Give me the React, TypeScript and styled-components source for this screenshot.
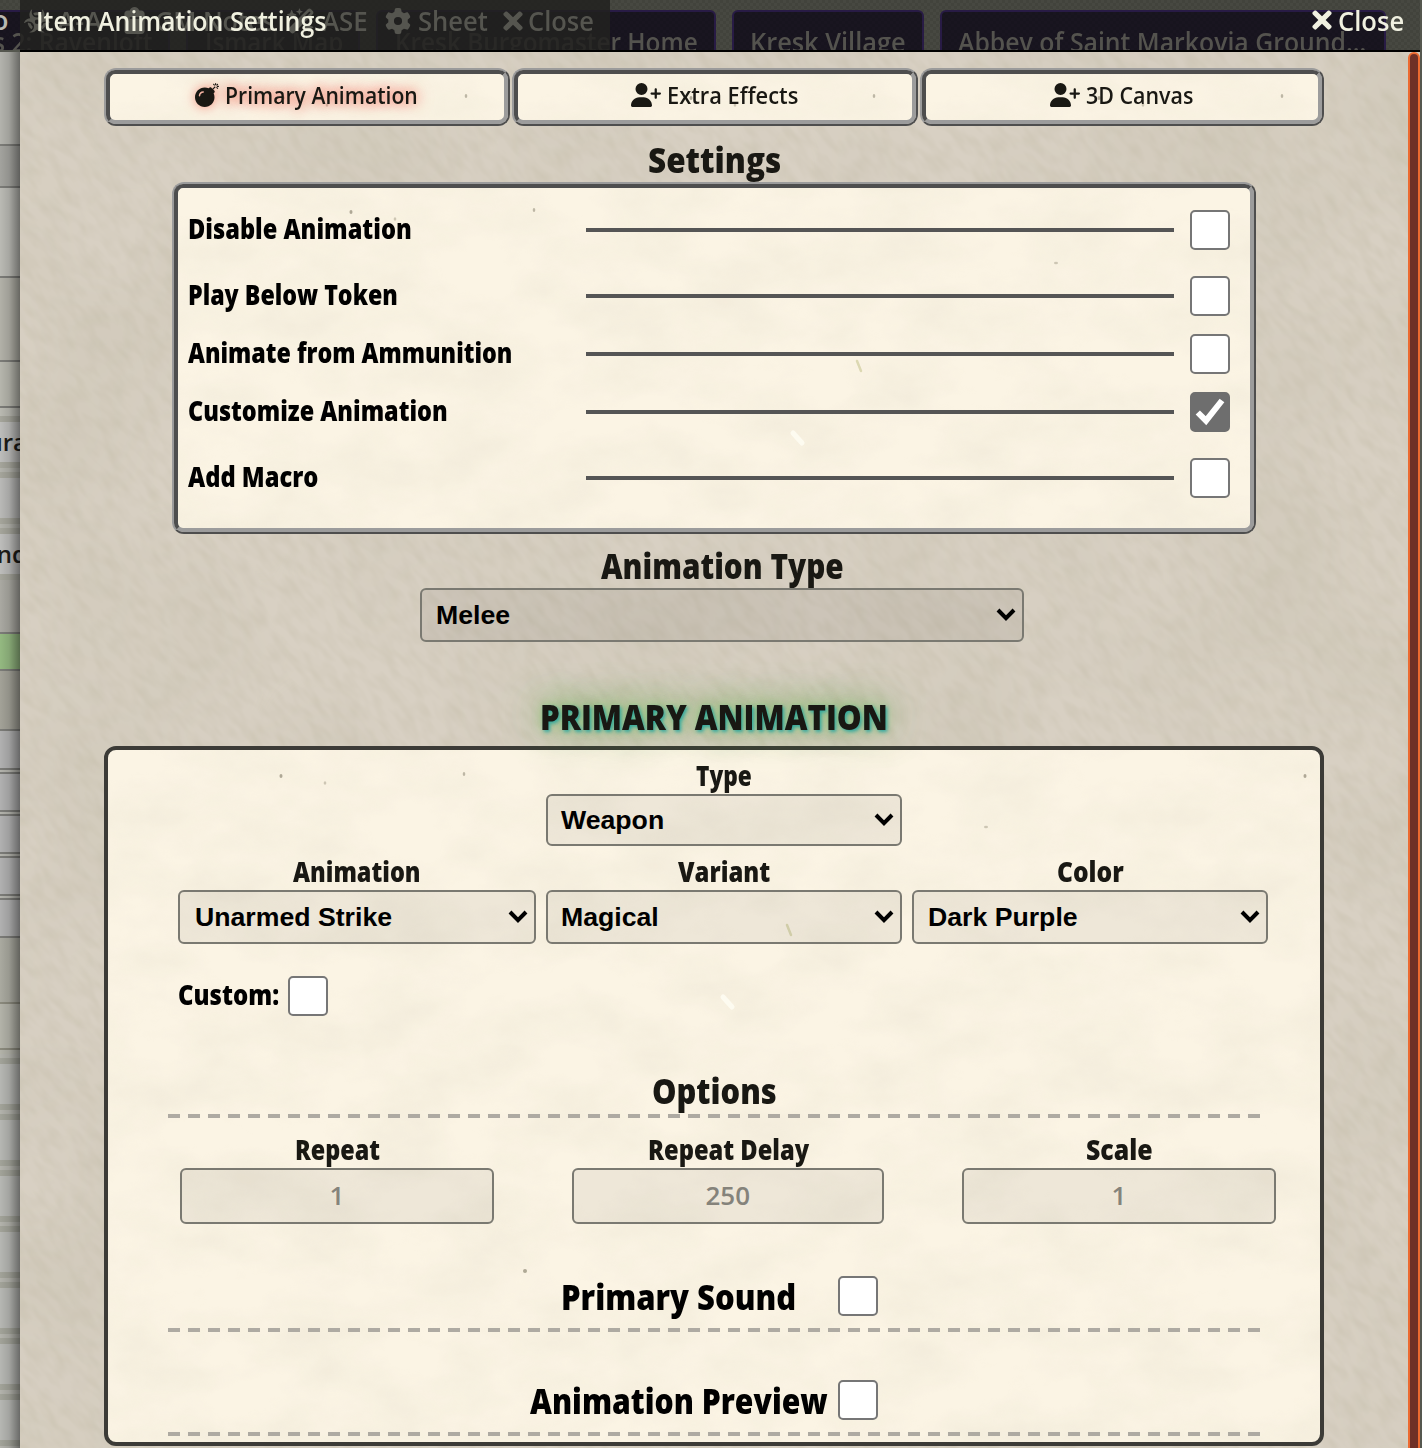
import React, { useLayoutEffect, useRef, useState } from "react";
import styled, { createGlobalStyle, css } from "styled-components";
import {
  FaUserPlus,
  FaGear,
  FaBiohazard,
  FaClipboard,
  FaWandMagicSparkles,
} from "react-icons/fa6";
import { FaBomb, FaTimes } from "react-icons/fa";

const uiFont = '"Open Sans", "Noto Sans", sans-serif';

const svgUri = (svg: string) => `url("data:image/svg+xml,${encodeURIComponent(svg)}")`;

const leather = svgUri(
  `<svg xmlns="http://www.w3.org/2000/svg" width="1400" height="1400"><filter id="n" x="0" y="0" width="100%" height="100%"><feTurbulence type="fractalNoise" baseFrequency="0.045 0.11" numOctaves="2" seed="4"/><feColorMatrix values="0 0 0 0 0.5  0 0 0 0 0.46  0 0 0 0 0.34  0.55 0 0 0 -0.2"/></filter><filter id="b" x="0" y="0" width="100%" height="100%"><feTurbulence type="fractalNoise" baseFrequency="0.006" numOctaves="2" seed="7"/><feColorMatrix values="0 0 0 0 0.5  0 0 0 0 0.47  0 0 0 0 0.36  0.5 0 0 0 -0.18"/></filter><rect width="1400" height="1400" filter="url(#b)"/><g transform="rotate(50 700 700)"><rect x="-400" y="-400" width="2200" height="2200" filter="url(#n)"/></g></svg>`
);

const parchment = svgUri(
  `<svg xmlns="http://www.w3.org/2000/svg" width="1024" height="1024"><filter id="n" x="0" y="0" width="100%" height="100%"><feTurbulence type="fractalNoise" baseFrequency="0.012 0.02" numOctaves="5" seed="9" stitchTiles="stitch"/><feColorMatrix values="0 0 0 0 0.55  0 0 0 0 0.5  0 0 0 0 0.38  0.24 0 0 0 -0.08"/></filter><rect width="1024" height="1024" filter="url(#n)"/><g fill="#8f8874" opacity=".7"><ellipse cx="173" cy="26" rx="1.5" ry="2"/><ellipse cx="217" cy="33" rx="1.3" ry="1.8" opacity=".6"/><ellipse cx="356" cy="24" rx="1.3" ry="2" opacity=".8"/><ellipse cx="878" cy="77" rx="2" ry="1.2" opacity=".6"/><ellipse cx="417" cy="521" rx="2" ry="2"/></g><g fill="none" stroke-linecap="round"><path d="M679 175l4 10" stroke="#dcd8b2" stroke-width="2.5"/><path d="M615 247l9 10" stroke="#fdfbf0" stroke-width="5"/></g></svg>`
);

const weave = svgUri(
  `<svg xmlns="http://www.w3.org/2000/svg" width="6" height="6"><path d="M0 0h3v3h-3zM3 3h3v3h-3z" fill="#000" opacity=".07"/></svg>`
);

const Global = createGlobalStyle`
  *, *::before, *::after { box-sizing: border-box; }
  body { margin: 0; background: #6f706b; overflow: hidden; }
`;

const Desktop = styled.div`
  position: relative;
  width: 1422px;
  height: 1448px;
  overflow: hidden;
  background: #55574f;
  font-family: ${uiFont};
`;

/* Text squeezed horizontally to the measure of a condensed face */
const FitBox = styled.span<{ $w: number }>`
  display: inline-block;
  flex: none;
  width: ${(p) => p.$w}px;
  white-space: nowrap;
  text-align: left;
`;
const FitInner = styled.span`
  display: inline-block;
  transform-origin: 0 50%;
`;
function Fit({ w, children }: { w: number; children: React.ReactNode }) {
  const ref = useRef<HTMLSpanElement>(null);
  const [scale, setScale] = useState(1);
  useLayoutEffect(() => {
    if (ref.current) setScale(w / ref.current.offsetWidth);
  }, [w, children]);
  return (
    <FitBox $w={w}>
      <FitInner ref={ref} style={{ transform: `scaleX(${scale})` }}>
        {children}
      </FitInner>
    </FitBox>
  );
}

/* ---- windows behind the dialog ---- */

const SheetBehind = styled.div`
  position: absolute;
  left: 0;
  top: 52px;
  width: 20px;
  height: 1396px;
  overflow: hidden;
  background: #b3b3ac;
  &::after {
    content: "";
    position: absolute;
    inset: 0;
    background: linear-gradient(90deg, transparent, rgba(0, 0, 0, 0.1) 45%, rgba(0, 0, 0, 0.42));
  }
`;
const Strip = styled.div<{ $h: number; $c: string; $edge?: number; $line?: string; $double?: boolean }>`
  height: ${(p) => p.$h}px;
  background: ${(p) => p.$c};
  border: 0 solid ${(p) => p.$line ?? "#7c7c78"};
  border-bottom-width: ${(p) => p.$edge ?? 2}px;
  border-top-width: ${(p) => (p.$double ? p.$edge ?? 2 : 0)}px;
  margin-top: ${(p) => (p.$double ? ((p.$edge ?? 2) > 2 ? 4 : 2) : 0)}px;
  display: flex;
  align-items: center;
  justify-content: flex-end;
  font-size: 24px;
  font-weight: 600;
  line-height: 30px;
  color: #1d1c18;
`;
const StripText = styled.span`
  margin-right: -7px;
`;

const NavLayer = styled.div`
  position: absolute;
  left: 0;
  top: 0;
  width: 1420px;
  height: 50px;
  overflow: hidden;
  background: ${weave}, #474841;
`;
const NavRow = styled.div`
  display: flex;
  gap: 16px;
  padding-top: 10px;
  margin-left: -20px;
`;
const NavButton = styled.div<{ $w: number; $pad: number }>`
  flex: none;
  width: ${(p) => p.$w}px;
  height: 60px;
  padding: 12px 0 0 ${(p) => p.$pad}px;
  border: 2px solid #281b45;
  border-radius: 6px;
  background: ${weave}, #191520;
  color: #54534e;
  font-size: 27px;
  font-weight: 600;
  line-height: 36px;
`;

const GhostHeader = styled.div`
  position: absolute;
  left: 20px;
  top: 0;
  width: 590px;
  height: 50px;
  display: flex;
  align-items: center;
  padding: 0 0 9px 4px;
  background: rgba(34, 34, 31, 0.86);
  color: #55554f;
  font-size: 27px;
  font-weight: 600;
`;
const GhostItem = styled.div<{ $w: number; $gap?: number }>`
  flex: none;
  width: ${(p) => p.$w}px;
  display: flex;
  align-items: center;
  gap: ${(p) => p.$gap ?? 7}px;
  svg { flex: none; }
`;

const EdgeLetter = styled.div`
  position: absolute;
  left: -8px;
  top: 3px;
  font-size: 27px;
  line-height: 34px;
  font-weight: 600;
  color: #b9b9b2;
`;

/* ---- dialog ---- */

const Dialog = styled.div`
  position: absolute;
  left: 20px;
  top: 0;
  width: 1400px;
  height: 1448px;
  display: flex;
  flex-direction: column;
`;
const Header = styled.header`
  flex: none;
  display: flex;
  justify-content: space-between;
  height: 52px;
  padding: 0 16px 10px 16px;
  align-items: center;
  border-bottom: 2px solid #000;
  color: #f0f0e0;
  font-size: 27.5px;
  font-weight: 600;
`;
const CloseButton = styled.div`
  display: flex;
  align-items: center;
  gap: 2px;
`;
const Body = styled.div`
  flex: 1;
  min-height: 0;
  display: flex;
  background: ${leather}, #d8d0c3;
`;
const Content = styled.div`
  width: 1388px;
  padding: 16px 84px 0;
  overflow: hidden;
  display: flex;
  flex-direction: column;
`;
const Scrollbar = styled.div`
  flex: none;
  width: 12px;
  height: 1420px;
  border: 2px solid #ec6a30;
  border-radius: 6px;
  background: #6f3026;
`;

const bevel = css`
  border: 2px solid;
  border-color: #9b9b9b #4e4e4e #4e4e4e #9b9b9b;
  border-radius: 12px;
  background: ${parchment} 4px 2px, #fbf4e4;
  > * {
    border: 4px solid;
    border-color: #4e4e4e #9c9c9c #9c9c9c #4e4e4e;
    border-radius: 9px;
  }
`;

const Tabs = styled.nav`
  flex: none;
  display: grid;
  grid-template-columns: 406px 406px 404px;
  gap: 2px;
  height: 58px;
`;
const Tab = styled.div<{ $active?: boolean }>`
  ${bevel}
  display: grid;
  color: #191813;
  font-size: 24px;
  font-weight: 600;
  text-shadow: ${(p) => (p.$active ? "0 0 12px rgba(240,48,32,.6), 0 0 20px rgba(240,60,40,.45)" : "none")};
  svg { filter: ${(p) => (p.$active ? "drop-shadow(0 0 6px rgba(240,50,30,.55))" : "none")}; }
`;
const TabFace = styled.div`
  display: flex;
  align-items: center;
  justify-content: center;
  gap: 6px;
  padding-bottom: 5px;
  padding-right: 1px;
`;

const Title = styled.h1<{ $top?: number; $h: number; $shift?: number; $glow?: boolean }>`
  flex: none;
  height: ${(p) => p.$h}px;
  line-height: ${(p) => p.$h}px;
  margin: ${(p) => p.$top ?? 0}px 0 0;
  padding-left: ${(p) => p.$shift ?? 0}px;
  text-align: center;
  color: #191813;
  font-size: 35.5px;
  font-weight: 800;
  position: ${(p) => (p.$glow ? "relative" : "static")};
  z-index: 1;
  text-shadow: ${(p) =>
    p.$glow
      ? "2px 2px 4px rgba(22,163,163,.8), 0 0 10px rgba(110,200,90,.5), 0 -2px 40px rgba(80,150,50,.85)"
      : "none"};
`;

const SettingsPanel = styled.section`
  ${bevel}
  flex: none;
  width: 1084px;
  height: 352px;
  margin: 0 auto;
  display: grid;
`;
const SettingsRows = styled.div`
  display: flex;
  flex-direction: column;
  padding: 22px 20px 0 10px;
`;
const SettingRow = styled.div<{ $gap: number }>`
  display: grid;
  grid-template-columns: 398px 588px 40px;
  align-items: center;
  height: 40px;
  margin-bottom: ${(p) => p.$gap}px;
  > :last-child { margin-left: 16px; }
`;
const Rule = styled.div`
  height: 4px;
  background: #555;
`;

const Label = styled.div<{ $dark?: boolean }>`
  color: ${(p) => (p.$dark ? "#000" : "#191813")};
  font-size: 27.5px;
  font-weight: 800;
  line-height: 35px;
  height: 36px;
  margin-top: -3px;
  white-space: nowrap;
`;

const Box = styled.span<{ $on?: boolean }>`
  flex: none;
  display: block;
  width: 40px;
  height: 40px;
  border: 2px solid ${(p) => (p.$on ? "#6e6e6e" : "#767676")};
  border-radius: 5px;
  background: ${(p) => (p.$on ? "#6e6e6e" : "#fff")};
`;
function Checkbox({ on }: { on?: boolean }) {
  return (
    <Box $on={on}>
      {on && (
        <svg width="36" height="36" viewBox="0 0 36 36" display="block">
          <path d="M5.8 18.5 L14 26.7 L30 6.5" fill="none" stroke="#fff" strokeWidth="6" />
        </svg>
      )}
    </Box>
  );
}

const Select = styled.div<{ $w: number; $h: number; $pad: number }>`
  flex: none;
  width: ${(p) => p.$w}px;
  height: ${(p) => p.$h}px;
  padding: 0 6px 0 ${(p) => p.$pad}px;
  display: flex;
  align-items: center;
  justify-content: space-between;
  border: 2px solid #7a7971;
  border-radius: 6px;
  background: rgba(0, 0, 0, 0.05);
  color: #000;
  font-family: "Liberation Sans", Arial, sans-serif;
  font-size: 26.67px;
  font-weight: 700;
`;
function Dropdown({ w, h = 54, pad = 14, children }: { w: number; h?: number; pad?: number; children: string }) {
  return (
    <Select $w={w} $h={h} $pad={pad}>
      {children}
      <svg width="20" height="16" viewBox="0 0 20 16">
        <path d="M2 3 L10 11.2 L18 3" fill="none" stroke="#000" strokeWidth="4" />
      </svg>
    </Select>
  );
}

const TypeSelectWrap = styled.div`
  flex: none;
  padding-left: 316px;
`;

const Panel = styled.section`
  flex: none;
  width: 1220px;
  height: 700px;
  margin-top: 8px;
  border: 4px solid #3c3b37;
  border-radius: 12px;
  background: ${parchment}, #fbf4e4;
  display: flex;
  flex-direction: column;
`;
const Field = styled.div`
  display: flex;
  flex-direction: column;
  align-items: center;
`;
const TypeField = styled(Field)`
  padding: 11px 0 0 20px;
`;
const SelectRow = styled.div`
  display: flex;
  gap: 10px;
  padding: 11px 0 0 70px;
`;
const CustomRow = styled.div`
  display: flex;
  align-items: center;
  gap: 9px;
  padding: 32px 0 0 70px;
`;
const Dashes = styled.div`
  flex: none;
  width: 1092px;
  height: 4px;
  margin-left: 60px;
  background: repeating-linear-gradient(90deg, #aeaaa2 0 12px, transparent 12px 20px);
`;
const InputRow = styled.div`
  display: flex;
  gap: 78px;
  padding: 17px 0 0 72px;
`;
const NumberInput = styled.div<{ $w: number }>`
  width: ${(p) => p.$w}px;
  height: 56px;
  border: 2px solid #7a7971;
  border-radius: 6px;
  background: rgba(0, 0, 0, 0.05);
  color: #85837b;
  display: flex;
  align-items: center;
  justify-content: center;
  padding-bottom: 3px;
  font-size: 26px;
  font-weight: 600;
`;
const ToggleRow = styled.div<{ $top: number; $gap: number; $left: number; $below: number }>`
  display: flex;
  align-items: center;
  height: 40px;
  gap: ${(p) => p.$gap}px;
  margin: ${(p) => p.$top}px 0 ${(p) => p.$below}px;
  padding-left: ${(p) => p.$left}px;
  font-size: 35.5px;
  font-weight: 800;
  line-height: 40px;
  color: #000;
`;

const settings = [
  { name: "Disable Animation", w: 224, gap: 26 },
  { name: "Play Below Token", w: 210, gap: 18 },
  { name: "Animate from Ammunition", w: 324, gap: 18 },
  { name: "Customize Animation", w: 260, gap: 26, on: true },
  { name: "Add Macro", w: 130, gap: 0 },
];

export default function App() {
  return (
    <Desktop>
      <Global />
      <SheetBehind>
        <Strip $h={94} $c="#b3b3ad" />
        <Strip $h={42} $c="#a3a39e" />
        <Strip $h={90} $c="#babab4" />
        <Strip $h={84} $c="#b2b1a8" />
        <Strip $h={46} $c="#b6b6ad" />
        <Strip $h={14} $c="#b9b9b1" $edge={6} $line="#a5a59b" />
        <Strip $h={46} $c="#bdbdbb" $edge={6} $line="#a5a59b"><StripText>ura</StripText></Strip>
        <Strip $h={52} $c="#b9b9b7" $edge={6} $line="#a5a59b" $double />
        <Strip $h={52} $c="#bdbdbb" $edge={6} $line="#a5a59b" $double><StripText>und</StripText></Strip>
        <Strip $h={54} $c="#aaa9a2" />
        <Strip $h={37} $c="#94b981" />
        <Strip $h={60} $c="#a3a298" />
        <Strip $h={39} $c="#b1b1b1" />
        <Strip $h={40} $c="#b1b1b1" $double />
        <Strip $h={40} $c="#b1b1b1" $double />
        <Strip $h={40} $c="#b1b1b1" $double />
        <Strip $h={40} $c="#b1b1b1" $double />
        <Strip $h={66} $c="#aaaaa0" $line="#8b8a7d" />
        <Strip $h={46} $c="#b3b3a9" $line="#8b8a7d" />
        <Strip $h={4} $c="#b3b3a9" $edge={0} />
        {[0, 1, 2, 3, 4, 5, 6].map((i) => (
          <Strip key={i} $h={52} $c="#b6b7b3" $edge={6} $line="#a2a399" $double />
        ))}
      </SheetBehind>
      <NavLayer>
        <NavRow>
          <NavButton $w={190} $pad={11}><Fit w={160}>s 2: Ravenloft</Fit></NavButton>
          <NavButton $w={174} $pad={17}><Fit w={138}>Ismark Map</Fit></NavButton>
          <NavButton $w={340} $pad={17}><Fit w={303}>Kresk Burgomaster Home</Fit></NavButton>
          <NavButton $w={192} $pad={16}><Fit w={156}>Kresk Village</Fit></NavButton>
          <NavButton $w={446} $pad={16}><Fit w={408}>Abbey of Saint Markovia Ground…</Fit></NavButton>
        </NavRow>
      </NavLayer>
      <GhostHeader>
        <GhostItem $w={97}><FaBiohazard size={26} /><Fit w={45}>A-A</Fit></GhostItem>
        <GhostItem $w={166}><FaClipboard size={27} /><Fit w={120}>GM Notes</Fit></GhostItem>
        <GhostItem $w={98}><FaWandMagicSparkles size={28} /><Fit w={46}>ASE</Fit></GhostItem>
        <GhostItem $w={114}><FaGear size={26} /><Fit w={70}>Sheet</Fit></GhostItem>
        <GhostItem $w={100} $gap={1}><FaTimes size={28} /><Fit w={66}>Close</Fit></GhostItem>
      </GhostHeader>
      <EdgeLetter>o</EdgeLetter>
      <Dialog>
        <Header>
          <Fit w={290}>Item Animation Settings</Fit>
          <CloseButton>
            <FaTimes size={28} />
            <Fit w={66}>Close</Fit>
          </CloseButton>
        </Header>
        <Body>
          <Content>
            <Tabs>
              <Tab $active>
                <TabFace><FaBomb size={24} /><Fit w={193}>Primary Animation</Fit></TabFace>
              </Tab>
              <Tab>
                <TabFace><FaUserPlus size={30} /><Fit w={131}>Extra Effects</Fit></TabFace>
              </Tab>
              <Tab>
                <TabFace><FaUserPlus size={30} /><Fit w={107}>3D Canvas</Fit></TabFace>
              </Tab>
            </Tabs>
            <Title $top={11} $h={45}><Fit w={133}>Settings</Fit></Title>
            <SettingsPanel>
              <SettingsRows>
                {settings.map((s) => (
                  <SettingRow key={s.name} $gap={s.gap}>
                    <Label $dark><Fit w={s.w}>{s.name}</Fit></Label>
                    <Rule />
                    <Checkbox on={s.on} />
                  </SettingRow>
                ))}
              </SettingsRows>
            </SettingsPanel>
            <Title $top={9} $h={45} $shift={16}><Fit w={243}>Animation Type</Fit></Title>
            <TypeSelectWrap><Dropdown w={604}>Melee</Dropdown></TypeSelectWrap>
            <Title $top={52} $h={44} $glow><Fit w={348}>PRIMARY ANIMATION</Fit></Title>
            <Panel>
              <TypeField>
                <Label><Fit w={56}>Type</Fit></Label>
                <Dropdown w={356} h={52} pad={13}>Weapon</Dropdown>
              </TypeField>
              <SelectRow>
                <Field><Label><Fit w={128}>Animation</Fit></Label><Dropdown w={358} pad={15}>Unarmed Strike</Dropdown></Field>
                <Field><Label><Fit w={92}>Variant</Fit></Label><Dropdown w={356} pad={13}>Magical</Dropdown></Field>
                <Field><Label><Fit w={67}>Color</Fit></Label><Dropdown w={356} pad={14}>Dark Purple</Dropdown></Field>
              </SelectRow>
              <CustomRow><Label $dark><Fit w={101}>Custom:</Fit></Label><Checkbox /></CustomRow>
              <Title $top={50} $h={48}><Fit w={125}>Options</Fit></Title>
              <Dashes />
              <InputRow>
                <Field><Label><Fit w={85}>Repeat</Fit></Label><NumberInput $w={314}>1</NumberInput></Field>
                <Field><Label><Fit w={161}>Repeat Delay</Fit></Label><NumberInput $w={312}><Fit w={45}>250</Fit></NumberInput></Field>
                <Field><Label><Fit w={67}>Scale</Fit></Label><NumberInput $w={314}>1</NumberInput></Field>
              </InputRow>
              <ToggleRow $top={52} $below={12} $left={453} $gap={42}><Fit w={235}>Primary Sound</Fit><Checkbox /></ToggleRow>
              <Dashes />
              <ToggleRow $top={48} $below={12} $left={422} $gap={10}><Fit w={298}>Animation Preview</Fit><Checkbox /></ToggleRow>
              <Dashes />
            </Panel>
          </Content>
          <Scrollbar />
        </Body>
      </Dialog>
    </Desktop>
  );
}
